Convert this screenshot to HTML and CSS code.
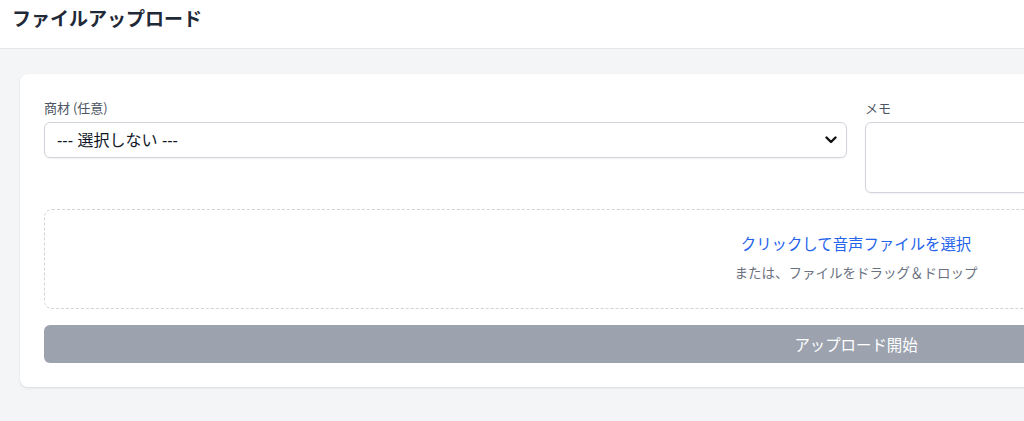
FILE: index.html
```html
<!DOCTYPE html>
<html lang="ja">
<head>
<meta charset="utf-8">
<title>ファイルアップロード</title>
<link rel="stylesheet" href="styles.css">
</head>
<body>
<div class="page">
  <header class="topbar">
    <h1 class="title">ファイルアップロード</h1>
  </header>
  <main class="main">
    <section class="card">
      <div class="fields">
        <div class="field">
          <label class="label" for="product">商材 (任意)</label>
          <div class="select-wrap">
            <select id="product" class="select">
              <option>--- 選択しない ---</option>
            </select>
            <svg class="chevron" width="12" height="8" viewBox="0 0 12 8" aria-hidden="true">
              <path d="M1.5 1.5 L6 6 L10.5 1.5" fill="none" stroke="#111" stroke-width="2.4" stroke-linecap="round" stroke-linejoin="round"/>
            </svg>
          </div>
        </div>
        <div class="field">
          <label class="label" for="memo">メモ</label>
          <textarea id="memo" class="textarea"></textarea>
        </div>
      </div>
      <div class="dropzone">
        <span class="drop-link">クリックして音声ファイルを選択</span>
        <span class="drop-hint">または、ファイルをドラッグ＆ドロップ</span>
      </div>
      <button class="submit" type="button" disabled>アップロード開始</button>
    </section>
  </main>
</div>
</body>
</html>
```
FILE: styles.css
```css
* { box-sizing: border-box; }
html, body {
  margin: 0;
  padding: 0;
  overflow: hidden;
}
body {
  font-family: "Noto Sans CJK JP", "Noto Sans", sans-serif;
  background: #f4f5f7;
  color: #1f2937;
}
.page {
  width: 1712px;
  min-height: 421px;
  background: #f4f5f7;
}
.topbar {
  background: #ffffff;
  border-bottom: 1px solid #e5e7eb;
  padding: 4px 12px 16px;
  height: 49px;
}
.title {
  margin: 0;
  font-size: 19px;
  line-height: 28px;
  font-weight: 700;
  color: #1f2937;
}
.main {
  padding: 25px 20px;
}
.card {
  background: #ffffff;
  border-radius: 8px;
  box-shadow: 0 1px 3px rgba(0,0,0,0.08), 0 1px 2px rgba(0,0,0,0.04);
  padding: 24px;
  display: flex;
  flex-direction: column;
  gap: 16px;
}
.fields {
  display: grid;
  grid-template-columns: 1fr 1fr;
  gap: 18px;
  align-items: start;
}
.field {
  display: flex;
  flex-direction: column;
  gap: 4px;
}
.label {
  font-size: 13px;
  line-height: 20px;
  color: #4b5563;
}
.select-wrap {
  position: relative;
}
.select {
  appearance: none;
  -webkit-appearance: none;
  width: 100%;
  height: 36px;
  border: 1px solid #d1d5db;
  border-radius: 6px;
  background: #ffffff;
  padding: 0 36px 0 12px;
  font-family: "Liberation Sans", "Noto Sans CJK JP", sans-serif;
  font-size: 16px;
  color: #111827;
  box-shadow: 0 1px 2px rgba(0,0,0,0.05);
}
.chevron {
  position: absolute;
  right: 10px;
  top: 14px;
  pointer-events: none;
}
.textarea {
  width: 100%;
  height: 71px;
  border: 1px solid #d1d5db;
  border-radius: 6px;
  resize: none;
  box-shadow: 0 1px 2px rgba(0,0,0,0.05);
}
.dropzone {
  border: 1px dashed #d1d5db;
  border-radius: 8px;
  padding: 23px 16px 26px;
  display: flex;
  flex-direction: column;
  align-items: center;
  gap: 9px;
}
.drop-link {
  font-size: 15.4px;
  line-height: 20px;
  color: #2563eb;
}
.drop-hint {
  font-size: 13.5px;
  line-height: 20px;
  color: #6b7280;
}
.submit {
  height: 38px;
  border: none;
  border-radius: 6px;
  background: #9ca3af;
  color: #ffffff;
  font-family: "Noto Sans CJK JP", sans-serif;
  font-size: 15.4px;
}
```
